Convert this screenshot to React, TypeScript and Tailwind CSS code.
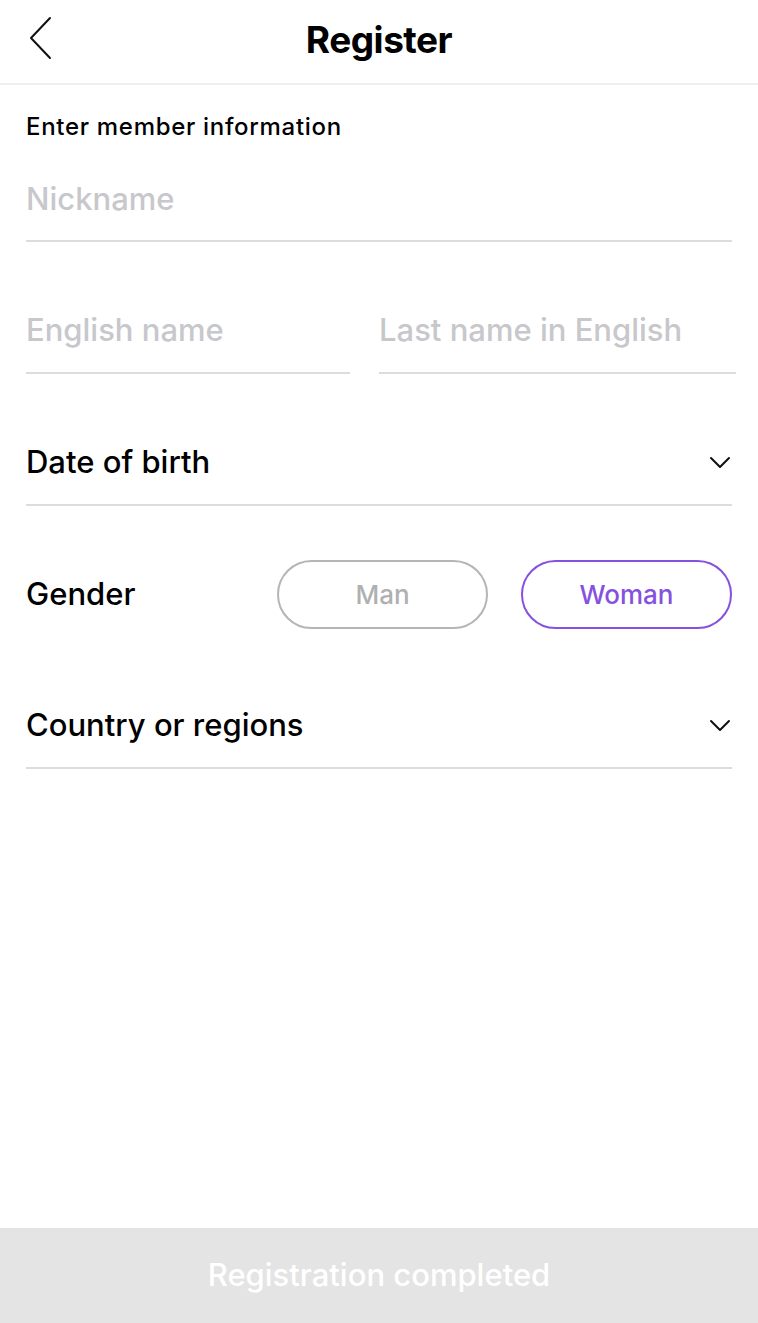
import { useState } from 'react';

const ChevronDown = () => (
	<svg width="22" height="13" viewBox="0 0 22 13" fill="none">
		<path d="M2 2 L11 11 L20 2" stroke="#111" strokeWidth="2" strokeLinecap="round" strokeLinejoin="round" />
	</svg>
);

const BackIcon = () => (
	<svg width="26" height="44" viewBox="0 0 26 44" fill="none">
		<path d="M22 2 L3 22 L22 42" stroke="#111" strokeWidth="2" strokeLinecap="round" strokeLinejoin="round" />
	</svg>
);

export default function App() {
	const [gender, setGender] = useState<'man' | 'woman'>('woman');

	return (
		<div
			className="w-[758px] h-[1323px] bg-white flex flex-col text-black"
			style={{ fontFamily: 'Inter, "Noto Sans", sans-serif' }}
		>
			<header className="relative h-[85px] shrink-0 flex items-center justify-center pb-[4px] border-b-2 border-[#efefef]">
				<button className="absolute left-[28px] top-[16px]">
					<BackIcon />
				</button>
				<h1 className="text-[37px] font-bold tracking-[-0.5px]">Register</h1>
			</header>

			<main className="flex-1 px-[26px]">
				<p className="pt-[27px] text-[24px] leading-[30px] font-medium tracking-[0.7px]">Enter member information</p>

				<div className="mt-[39px] h-[61px] border-b-2 border-[#dcdcdc] text-[31px] leading-[36px] font-medium text-[#c7c7cc]">
					Nickname
				</div>

				<div className="flex gap-[29px]">
					<div className="w-[324px] h-[132px] pt-[70px] border-b-2 border-[#dcdcdc] text-[31px] leading-[36px] font-medium text-[#c7c7cc]">
						English name
					</div>
					<div className="flex-1 -mr-[4px] h-[132px] pt-[70px] border-b-2 border-[#dcdcdc] text-[31px] leading-[36px] font-medium text-[#c7c7cc]">
						Last name in English
					</div>
				</div>

				<div className="h-[132px] pt-[70px] border-b-2 border-[#dcdcdc] flex justify-between">
					<span className="text-[31px] leading-[36px] font-medium">Date of birth</span>
					<span className="pt-[12px] mr-[1px]">
						<ChevronDown />
					</span>
				</div>

				<div className="h-[131px] pt-[54px] flex items-start">
					<span className="flex-1 pt-[16px] text-[31px] leading-[36px] font-medium">Gender</span>
					<button
						onClick={() => setGender('man')}
						className={
							gender === 'man'
								? 'w-[211px] h-[69px] rounded-full border-2 border-[#8551de] text-[26px] font-medium text-[#8551de]'
								: 'w-[211px] h-[69px] rounded-full border-2 border-[#b5b5b5] text-[26px] font-medium text-[#b0b0b0]'
						}
					>
						Man
					</button>
					<button
						onClick={() => setGender('woman')}
						className={
							gender === 'woman'
								? 'ml-[33px] w-[211px] h-[69px] rounded-full border-2 border-[#8551de] text-[26px] font-medium text-[#8551de]'
								: 'ml-[33px] w-[211px] h-[69px] rounded-full border-2 border-[#b5b5b5] text-[26px] font-medium text-[#b0b0b0]'
						}
					>
						Woman
					</button>
				</div>

				<div className="h-[132px] pt-[70px] border-b-2 border-[#dcdcdc] flex justify-between">
					<span className="text-[31px] leading-[36px] font-medium">Country or regions</span>
					<span className="pt-[12px] mr-[1px]">
						<ChevronDown />
					</span>
				</div>
			</main>

			<button className="h-[95px] shrink-0 bg-[#e4e4e4] text-white text-[31px] font-medium">
				Registration completed
			</button>
		</div>
	);
}
